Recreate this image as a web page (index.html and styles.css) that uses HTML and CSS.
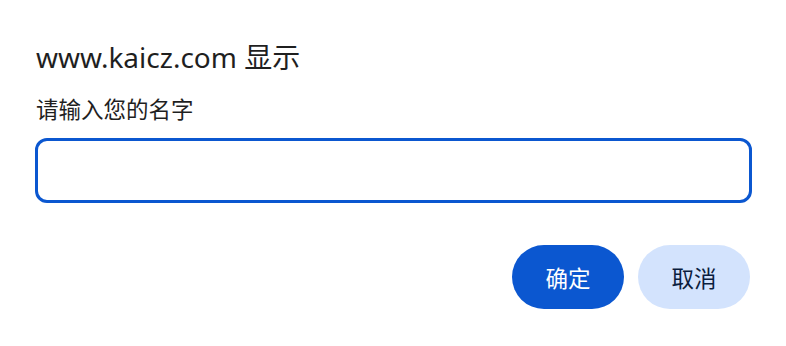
FILE: index.html
```html
<!DOCTYPE html>
<html lang="zh-CN">
<head>
<meta charset="utf-8">
<title>www.kaicz.com 显示</title>
<link rel="stylesheet" href="styles.css">
</head>
<body>
<div class="dialog">
  <h1 class="title">www.kaicz.com 显示</h1>
  <p class="message">请输入您的名字</p>
  <input class="field" type="text" aria-label="请输入您的名字">
  <div class="actions">
    <button class="btn btn-primary" type="button">确定</button>
    <button class="btn btn-secondary" type="button">取消</button>
  </div>
</div>
</body>
</html>
```

FILE: styles.css
```css
html, body {
  margin: 0;
  padding: 0;
  background: #ffffff;
}

body {
  font-family: "Noto Sans", "Noto Sans CJK SC", sans-serif;
  color: #1f1f1f;
}

.dialog {
  display: flex;
  flex-direction: column;
  padding: 39px 34px 0 35px;
}

.title {
  margin: 0 0 0 1px;
  font-size: 28px;
  font-weight: 400;
  line-height: 36px;
}

.message {
  margin: 20px 0 0 1px;
  font-size: 22.5px;
  line-height: 30px;
}

.field {
  box-sizing: border-box;
  margin: 13px 0 0 0;
  width: 717px;
  height: 65px;
  border: 3px solid #0b57d0;
  border-radius: 12px;
  outline: none;
  background: #ffffff;
  font: inherit;
}

.actions {
  display: flex;
  justify-content: flex-end;
  gap: 14px;
  margin: 42px 2px 0 0;
}

.btn {
  width: 112px;
  height: 64px;
  border: none;
  border-radius: 32px;
  font-family: "Noto Sans", "Noto Sans CJK SC", sans-serif;
  font-size: 22.5px;
  padding: 0;
  cursor: pointer;
}

.btn-primary {
  background: #0b57d0;
  color: #ffffff;
}

.btn-secondary {
  background: #d3e3fd;
  color: #0b1d3d;
}
```
